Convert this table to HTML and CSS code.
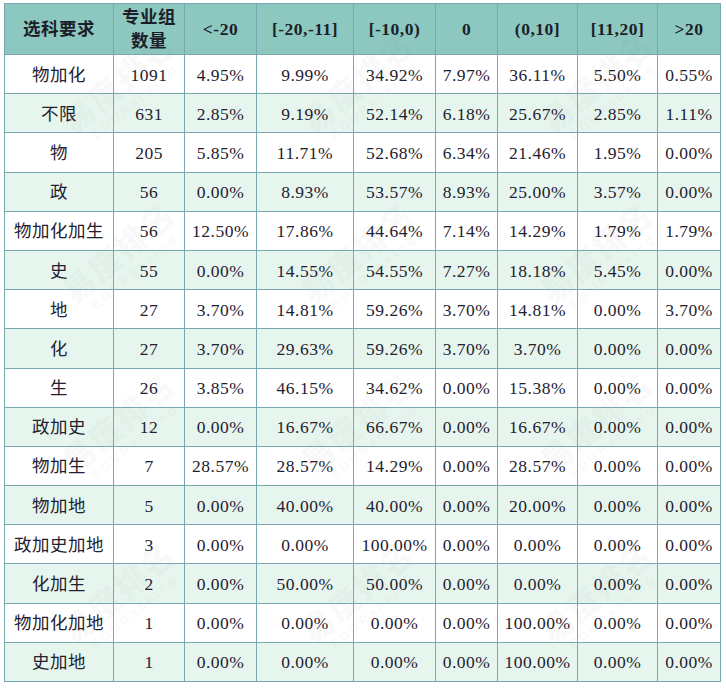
FILE: index.html
```html
<!DOCTYPE html>
<html lang="zh-CN">
<head>
<meta charset="utf-8">
<title>选科要求分布</title>
<link rel="stylesheet" href="styles.css">
</head>
<body>
<div class="wrap">
  <table class="grid">
    <colgroup>
      <col class="c1"><col class="c2"><col class="c3"><col class="c4"><col class="c5"><col class="c6"><col class="c7"><col class="c8"><col class="c9">
    </colgroup>
    <thead>
      <tr>
        <th>选科要求</th><th>专业组数量</th><th>&lt;-20</th><th>[-20,-11]</th><th>[-10,0)</th><th>0</th><th>(0,10]</th><th>[11,20]</th><th>&gt;20</th>
      </tr>
    </thead>
    <tbody>
      <tr><td>物加化</td><td>1091</td><td>4.95%</td><td>9.99%</td><td>34.92%</td><td>7.97%</td><td>36.11%</td><td>5.50%</td><td>0.55%</td></tr>
      <tr><td>不限</td><td>631</td><td>2.85%</td><td>9.19%</td><td>52.14%</td><td>6.18%</td><td>25.67%</td><td>2.85%</td><td>1.11%</td></tr>
      <tr><td>物</td><td>205</td><td>5.85%</td><td>11.71%</td><td>52.68%</td><td>6.34%</td><td>21.46%</td><td>1.95%</td><td>0.00%</td></tr>
      <tr><td>政</td><td>56</td><td>0.00%</td><td>8.93%</td><td>53.57%</td><td>8.93%</td><td>25.00%</td><td>3.57%</td><td>0.00%</td></tr>
      <tr><td>物加化加生</td><td>56</td><td>12.50%</td><td>17.86%</td><td>44.64%</td><td>7.14%</td><td>14.29%</td><td>1.79%</td><td>1.79%</td></tr>
      <tr><td>史</td><td>55</td><td>0.00%</td><td>14.55%</td><td>54.55%</td><td>7.27%</td><td>18.18%</td><td>5.45%</td><td>0.00%</td></tr>
      <tr><td>地</td><td>27</td><td>3.70%</td><td>14.81%</td><td>59.26%</td><td>3.70%</td><td>14.81%</td><td>0.00%</td><td>3.70%</td></tr>
      <tr><td>化</td><td>27</td><td>3.70%</td><td>29.63%</td><td>59.26%</td><td>3.70%</td><td>3.70%</td><td>0.00%</td><td>0.00%</td></tr>
      <tr><td>生</td><td>26</td><td>3.85%</td><td>46.15%</td><td>34.62%</td><td>0.00%</td><td>15.38%</td><td>0.00%</td><td>0.00%</td></tr>
      <tr><td>政加史</td><td>12</td><td>0.00%</td><td>16.67%</td><td>66.67%</td><td>0.00%</td><td>16.67%</td><td>0.00%</td><td>0.00%</td></tr>
      <tr><td>物加生</td><td>7</td><td>28.57%</td><td>28.57%</td><td>14.29%</td><td>0.00%</td><td>28.57%</td><td>0.00%</td><td>0.00%</td></tr>
      <tr><td>物加地</td><td>5</td><td>0.00%</td><td>40.00%</td><td>40.00%</td><td>0.00%</td><td>20.00%</td><td>0.00%</td><td>0.00%</td></tr>
      <tr><td>政加史加地</td><td>3</td><td>0.00%</td><td>0.00%</td><td>100.00%</td><td>0.00%</td><td>0.00%</td><td>0.00%</td><td>0.00%</td></tr>
      <tr><td>化加生</td><td>2</td><td>0.00%</td><td>50.00%</td><td>50.00%</td><td>0.00%</td><td>0.00%</td><td>0.00%</td><td>0.00%</td></tr>
      <tr><td>物加化加地</td><td>1</td><td>0.00%</td><td>0.00%</td><td>0.00%</td><td>0.00%</td><td>100.00%</td><td>0.00%</td><td>0.00%</td></tr>
      <tr><td>史加地</td><td>1</td><td>0.00%</td><td>0.00%</td><td>0.00%</td><td>0.00%</td><td>100.00%</td><td>0.00%</td><td>0.00%</td></tr>
    </tbody>
  </table>
  <div class="watermark" aria-hidden="true">
    <span class="wm">易度排名<small>EDURanking</small></span>
    <span class="wm">易度排名<small>EDURanking</small></span>
    <span class="wm">易度排名<small>EDURanking</small></span>
    <span class="wm">易度排名<small>EDURanking</small></span>
    <span class="wm">易度排名<small>EDURanking</small></span>
    <span class="wm">易度排名<small>EDURanking</small></span>
    <span class="wm">易度排名<small>EDURanking</small></span>
    <span class="wm">易度排名<small>EDURanking</small></span>
    <span class="wm">易度排名<small>EDURanking</small></span>
    <span class="wm">易度排名<small>EDURanking</small></span>
    <span class="wm">易度排名<small>EDURanking</small></span>
    <span class="wm">易度排名<small>EDURanking</small></span>
  </div>
</div>
</body>
</html>
```

FILE: styles.css
```css
html, body {
  margin: 0;
  padding: 0;
  background: #ffffff;
}

.wrap {
  position: relative;
  width: 716px;
  margin: 3px 0 0 4px;
}

.grid {
  border-collapse: collapse;
  table-layout: fixed;
  width: 716px;
  font-family: "Liberation Serif", "Noto Sans CJK SC", serif;
  font-size: 17.5px;
  letter-spacing: 0.5px;
  color: #1f2130;
}

.c1 { width: 109px; }
.c2 { width: 71px; }
.c3 { width: 72px; }
.c4 { width: 97px; }
.c5 { width: 82px; }
.c6 { width: 62px; }
.c7 { width: 80px; }
.c8 { width: 80px; }
.c9 { width: 63px; }

.grid th,
.grid td {
  border: 1px solid #78a9b3;
  text-align: center;
  vertical-align: middle;
  padding: 0 1px;
  white-space: nowrap;
}

.grid thead tr {
  height: 51px;
}

.grid tbody tr {
  height: 39.2px;
}

.grid th {
  background: #8cc8c0;
  font-weight: bold;
  line-height: 24px;
  white-space: normal;
  color: #1c1e28;
}

.grid td {
  line-height: 20px;
  padding-top: 1px;
}

.grid tbody tr:nth-child(even) td {
  background: #e6f5ed;
}

.watermark {
  position: absolute;
  inset: 0;
  overflow: hidden;
  pointer-events: none;
  display: grid;
  grid-template-columns: repeat(3, 1fr);
  grid-template-rows: repeat(4, 1fr);
  align-items: center;
  justify-items: center;
}

.wm {
  display: flex;
  flex-direction: column;
  align-items: center;
  transform: rotate(-40deg);
  font-family: "Noto Sans CJK SC", sans-serif;
  font-weight: 900;
  font-size: 32px;
  line-height: 1;
  color: rgba(90, 90, 90, 0.05);
  letter-spacing: 2px;
}

.wm small {
  font-family: "Liberation Sans", sans-serif;
  font-weight: bold;
  font-size: 13px;
  letter-spacing: 3px;
  margin-top: 4px;
}
```
